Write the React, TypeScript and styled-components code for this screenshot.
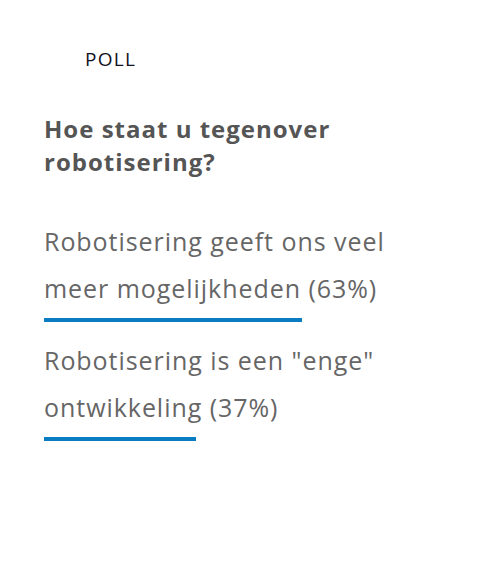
import React from 'react';
import styled, {createGlobalStyle} from 'styled-components';

type Option = {
    label: string;
    percent: number;
};

const options: Option[] = [
    {label: 'Robotisering geeft ons veel meer mogelijkheden', percent: 63},
    {label: 'Robotisering is een "enge" ontwikkeling', percent: 37},
];

const App = () => {
    return (
        <Page>
            <GlobalStyle />
            <Title>POLL</Title>
            <Question>Hoe staat u tegenover robotisering?</Question>
            <OptionList>
                {options.map(option => (
                    <OptionItem key={option.label}>
                        <OptionText>
                            {option.label} ({option.percent}%)
                        </OptionText>
                        <BarTrack>
                            <Bar style={{width: `${option.percent}%`}} />
                        </BarTrack>
                    </OptionItem>
                ))}
            </OptionList>
        </Page>
    );
};

export default App;

const GlobalStyle = createGlobalStyle`
    body {
        margin: 0;
        background: #ffffff;
        font-family: 'Open Sans', sans-serif;
    }
`;

const Page = styled.div`
    width: 500px;
    height: 578px;
    box-sizing: border-box;
    padding: 47px 46px 0 44px;
`;

const Title = styled.div`
    margin-left: 41px;
    font-size: 19px;
    line-height: 24px;
    color: #111122;
    letter-spacing: 1.3px;
`;

const Question = styled.h2`
    margin: 41px 0 0 0;
    width: 340px;
    font-size: 24px;
    line-height: 33px;
    font-weight: 700;
    letter-spacing: 1px;
    color: #555555;
`;

const OptionList = styled.div`
    margin-top: 40px;
    display: flex;
    flex-direction: column;
    gap: 15px;
`;

const OptionItem = styled.div`
    display: flex;
    flex-direction: column;
`;

const OptionText = styled.div`
    max-width: 365px;
    font-size: 25px;
    line-height: 47px;
    letter-spacing: 0.95px;
    color: #666666;
`;

const BarTrack = styled.div`
    width: 410px;
    height: 4px;
    margin-top: 6px;
`;

const Bar = styled.div`
    height: 100%;
    background-color: #0a7dc2;
`;
